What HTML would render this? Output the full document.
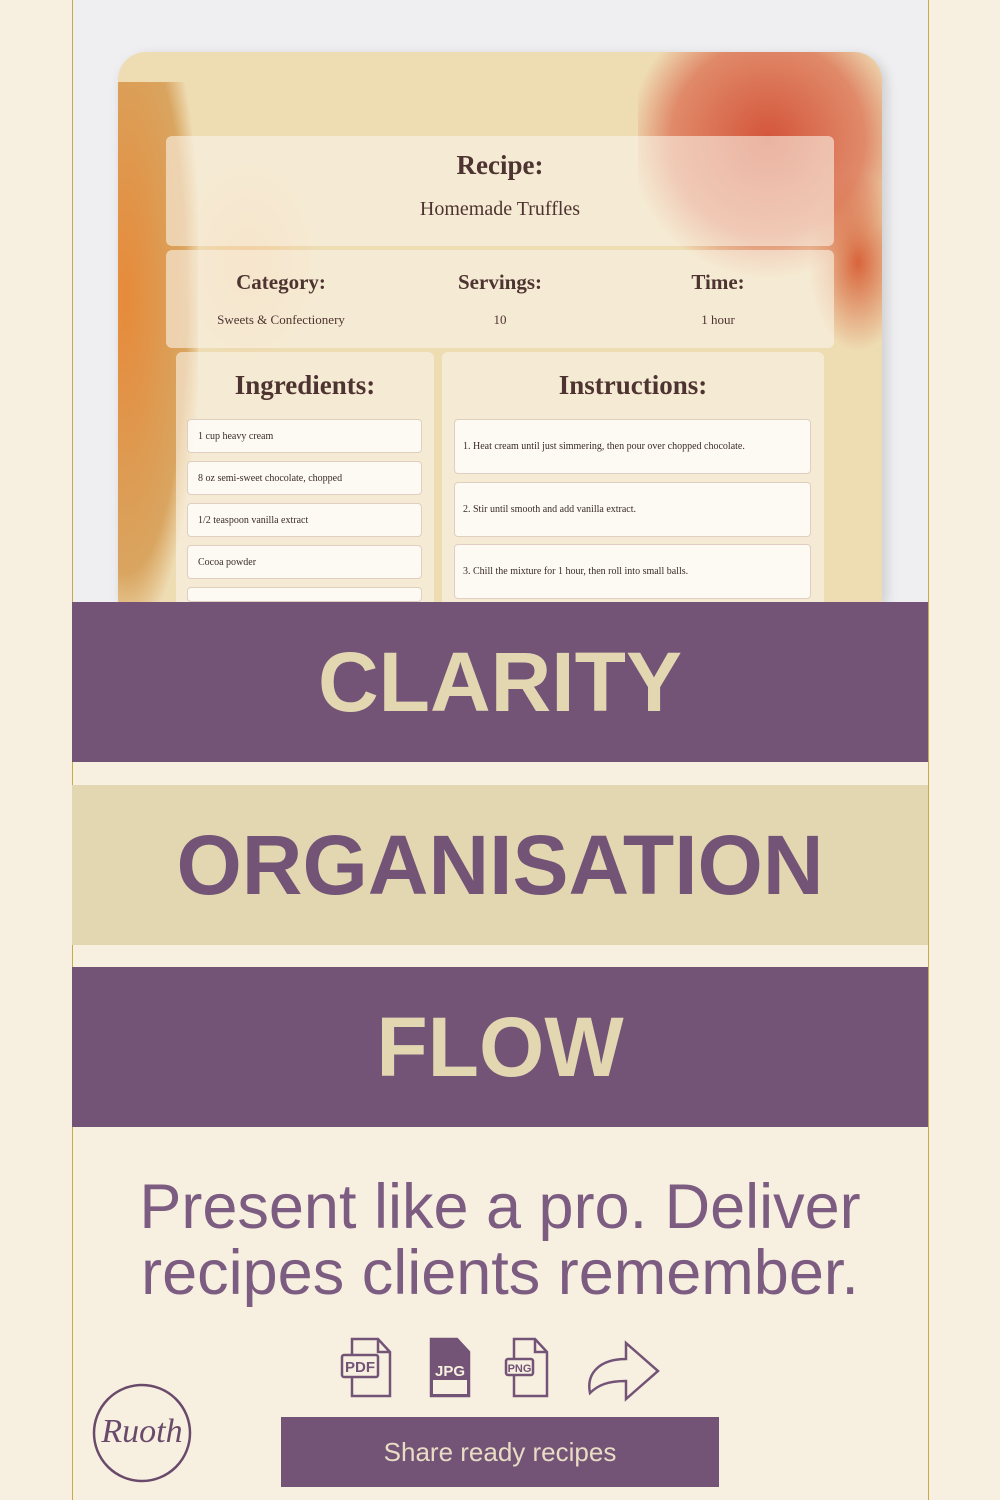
<!DOCTYPE html>
<html><head><meta charset="utf-8"><style>
*{margin:0;padding:0;box-sizing:border-box}
body{width:1000px;height:1500px;background:#f7f0e1;position:relative;overflow:hidden;font-family:"Liberation Sans",sans-serif}
.abs{position:absolute}
.serif{font-family:"Liberation Serif",serif;color:#4e3430}
.panel{position:absolute;background:rgba(250,244,232,.6);border-radius:6px}
.box{position:absolute;background:rgba(255,255,255,.75);border:1px solid #e0cfc0;border-radius:4px;font-family:"Liberation Serif",serif;font-size:10px;color:#3a2a28;padding-left:10px;display:flex;align-items:center}
.band{position:absolute;left:72px;width:856px;height:160px;display:flex;align-items:center;justify-content:center;font-weight:bold;font-size:84px}
</style></head><body>
<div class="abs" style="left:72px;top:0;width:1px;height:1500px;background:#c6a94a"></div>
<div class="abs" style="left:928px;top:0;width:1px;height:1500px;background:#c6a94a"></div>
<div class="abs" style="left:73px;top:0;width:855px;height:602px;background:#efeff1"></div>
<div class="abs" style="left:118px;top:52px;width:764px;height:550px;border-radius:28px 28px 0 0;overflow:hidden;background:#eedcb3;box-shadow:4px 4px 12px rgba(0,0,0,.15)">
 <div class="abs" style="left:-40px;top:30px;width:120px;height:540px;background:radial-gradient(ellipse at 40% 40%,#e68a3a,#d9a560 60%,transparent 75%)"></div>
 <div class="abs" style="left:520px;top:-30px;width:260px;height:260px;background:radial-gradient(circle at 50% 45%,#d4553a,#e08a6a 50%,transparent 72%)"></div>
 <div class="abs" style="left:690px;top:120px;width:100px;height:180px;background:radial-gradient(ellipse,#d8643c,transparent 70%)"></div>
 <div class="abs" style="left:60px;top:110px;width:140px;height:200px;background:radial-gradient(ellipse,#f3cfa4,transparent 70%)"></div>
 <div class="panel" style="left:48px;top:84px;width:668px;height:110px"></div>
 <div class="panel" style="left:48px;top:198px;width:668px;height:98px"></div>
 <div class="panel" style="left:58px;top:300px;width:258px;height:260px"></div>
 <div class="panel" style="left:324px;top:300px;width:382px;height:260px"></div>
</div>
<div class="abs serif" style="left:118px;width:764px;top:150px;text-align:center;font-weight:bold;font-size:27px">Recipe:</div>
<div class="abs serif" style="left:118px;width:764px;top:198px;text-align:center;font-size:20px">Homemade Truffles</div>
<div class="abs serif" style="left:181px;width:200px;top:270px;text-align:center;font-weight:bold;font-size:21px">Category:</div>
<div class="abs serif" style="left:400px;width:200px;top:270px;text-align:center;font-weight:bold;font-size:21px">Servings:</div>
<div class="abs serif" style="left:618px;width:200px;top:270px;text-align:center;font-weight:bold;font-size:21px">Time:</div>
<div class="abs serif" style="left:181px;width:200px;top:312px;text-align:center;font-size:13px">Sweets &amp; Confectionery</div>
<div class="abs serif" style="left:400px;width:200px;top:312px;text-align:center;font-size:13px">10</div>
<div class="abs serif" style="left:618px;width:200px;top:312px;text-align:center;font-size:13px">1 hour</div>
<div class="abs serif" style="left:176px;width:258px;top:370px;text-align:center;font-weight:bold;font-size:27px">Ingredients:</div>
<div class="abs serif" style="left:442px;width:382px;top:370px;text-align:center;font-weight:bold;font-size:27px">Instructions:</div>
<div class="box" style="left:187px;top:419px;width:235px;height:34px">1 cup heavy cream</div>
<div class="box" style="left:187px;top:461px;width:235px;height:34px">8 oz semi-sweet chocolate, chopped</div>
<div class="box" style="left:187px;top:503px;width:235px;height:34px">1/2 teaspoon vanilla extract</div>
<div class="box" style="left:187px;top:545px;width:235px;height:34px">Cocoa powder</div>
<div class="box" style="left:187px;top:587px;width:235px;height:15px"></div>
<div class="box" style="left:454px;top:419px;width:357px;height:55px;padding-left:8px">1. Heat cream until just simmering, then pour over chopped chocolate.</div>
<div class="box" style="left:454px;top:482px;width:357px;height:55px;padding-left:8px">2. Stir until smooth and add vanilla extract.</div>
<div class="box" style="left:454px;top:544px;width:357px;height:55px;padding-left:8px">3. Chill the mixture for 1 hour, then roll into small balls.</div>
<div class="band" style="top:602px;background:#735477;color:#e3d7b2">CLARITY</div>
<div class="band" style="top:785px;background:#e3d7b2;color:#735477">ORGANISATION</div>
<div class="band" style="top:967px;background:#735477;color:#e3d7b2">FLOW</div>
<div class="abs" style="left:40px;width:920px;top:1174px;text-align:center;font-size:63px;line-height:66px;color:#7c5c80;letter-spacing:0">Present like a pro. Deliver<br>recipes clients remember.</div>
<svg class="abs" style="left:330px;top:1335px" width="340" height="70" viewBox="0 0 340 70" fill="none" stroke="#735477" stroke-width="2.5">
 <path d="M22 4h26l12 13v44H22z M48 4v13h12"/><rect x="12" y="20" width="36" height="22" rx="2" fill="#f7f0e1"/>
 <text x="30" y="37" font-family="Liberation Sans" font-size="15" font-weight="bold" fill="#735477" stroke="none" text-anchor="middle">PDF</text>
 <path d="M101 4h26l12 13v44h-38z" fill="#735477"/><path d="M103 45h34v14h-34z" fill="#f7f0e1" stroke="none"/>
 <text x="120" y="41" font-family="Liberation Sans" font-size="15" font-weight="bold" fill="#f7f0e1" stroke="none" text-anchor="middle">JPG</text>
 <path d="M184 4h21l12 13v44h-33z M205 4v13h12"/><rect x="176" y="24" width="27" height="16" rx="2" fill="#f7f0e1"/>
 <text x="189.5" y="37" font-family="Liberation Sans" font-size="11" font-weight="bold" fill="#735477" stroke="none" text-anchor="middle">PNG</text>
 <path d="M260 58c-4-20 10-34 36-34V8l32 28-32 28V46c-18 0-28 4-36 12z"/>
</svg>
<div class="abs" style="left:281px;top:1417px;width:438px;height:70px;background:#735477;color:#e8dcc4;font-size:26px;display:flex;align-items:center;justify-content:center">Share ready recipes</div>
<svg class="abs" style="left:88px;top:1380px" width="110" height="110" viewBox="0 0 110 110" fill="none" stroke="#6a4a6a" stroke-width="2.5">
 <circle cx="54" cy="53" r="48"/>
 <text x="54" y="62" font-family="Liberation Serif" font-style="italic" font-size="34" fill="#6a4a6a" stroke="none" text-anchor="middle">Ruoth</text>
</svg>
</body></html>
